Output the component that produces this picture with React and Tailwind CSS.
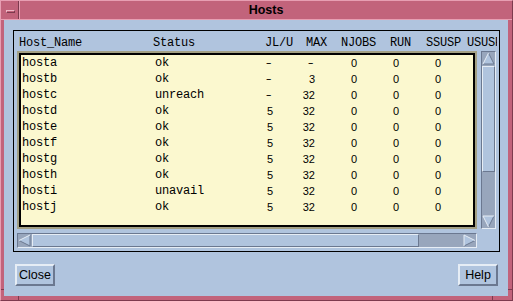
import React from "react";

const rows = [
  ["hosta", "ok", "-", "-", "0", "0", "0"],
  ["hostb", "ok", "-", "3", "0", "0", "0"],
  ["hostc", "unreach", "-", "32", "0", "0", "0"],
  ["hostd", "ok", "5", "32", "0", "0", "0"],
  ["hoste", "ok", "5", "32", "0", "0", "0"],
  ["hostf", "ok", "5", "32", "0", "0", "0"],
  ["hostg", "ok", "5", "32", "0", "0", "0"],
  ["hosth", "ok", "5", "32", "0", "0", "0"],
  ["hosti", "unavail", "5", "32", "0", "0", "0"],
  ["hostj", "ok", "5", "32", "0", "0", "0"],
];

const mono = "font-['Liberation_Mono',monospace] text-[12px] tracking-[-0.2px]";
const sans = "font-['Liberation_Sans',Arial,sans-serif]";

function Arrow({ dir }) {
  const pts = {
    up: "6.5,1 12,12 1,12",
    down: "1,1 12,1 6.5,12",
    left: "1,6.5 12,1 12,12",
    right: "1,1 12,6.5 1,12",
  }[dir];
  const light = {
    up: "M6.5 1 L1 12",
    down: "M1 1 L12 1 M1 1 L6.5 12",
    left: "M1 6.5 L12 1",
    right: "M1 1 L1 12 M1 1 L12 6.5",
  }[dir];
  const dark = {
    up: "M6.5 1 L12 12 L1 12",
    down: "M12 1 L6.5 12",
    left: "M1 6.5 L12 12 L12 1",
    right: "M1 12 L12 6.5",
  }[dir];
  return (
    <svg width="13" height="13" viewBox="0 0 13 13" className="block shrink-0">
      <polygon points={pts} fill="#b0c4de" />
      <path d={dark} stroke="#6b7890" strokeWidth="1" fill="none" />
      <path d={light} stroke="#e6edf5" strokeWidth="1" fill="none" />
    </svg>
  );
}

function Button({ children }) {
  return (
    <div
      className={`w-[40px] h-[22px] flex items-center justify-center bg-[#b0c4de] border-2 border-t-[#e6edf5] border-l-[#e6edf5] border-b-[#6b7890] border-r-[#6b7890] text-[12.5px] text-black ${sans}`}
    >
      {children}
    </div>
  );
}

function Num({ w, children }) {
  if (children === "-") {
    return (
      <div className={`${w} shrink-0 text-right text-[11px] leading-[16px] pr-px ${sans}`}>
        <span className="inline-block scale-x-[1.6] origin-right -translate-y-[1px]">-</span>
      </div>
    );
  }
  return <div className={`${w} shrink-0 text-right text-[11px] leading-[16px] ${sans}`}>{children}</div>;
}

export default function App() {
  return (
    <div className="w-[513px] h-[301px] bg-[#c2637b] flex flex-col border border-t-[#e79eb2] border-l-[#e79eb2] border-b-[#7d3a4e] border-r-[#7d3a4e]">
      {/* title bar */}
      <div className="h-[19px] flex border-b border-[#e79eb2]">
        <div className="w-[18px] flex items-center justify-center pl-[2px] pt-[2px] border-r border-[#7d3a4e]">
          <div className="w-[9px] h-[3px] border border-t-[#f0b8c6] border-l-[#f0b8c6] border-b-[#7d3a4e] border-r-[#7d3a4e]" />
        </div>
        <div className="w-px bg-[#e79eb2]" />
        <div className={`flex-1 flex items-center justify-center text-[12.5px] font-bold text-black leading-none pt-[1px] ${sans}`}>
          Hosts
        </div>
      </div>

      {/* middle */}
      <div className="flex-1 flex">
        <div className="w-[3px] flex flex-col">
          <div className="flex-1" />
          <div className="h-[7px] border-t border-[#7d3a4e]" />
        </div>
        <div className="w-[504px] bg-[#b0c4de] flex flex-col pt-[10px] pl-[9px] pr-[8px]">
          <div className="h-[222px] border border-black flex flex-col">
            {/* header */}
            <div className={`h-[20px] pt-[4px] pl-[5px] flex leading-[16px] whitespace-nowrap overflow-hidden text-black ${mono}`}>
              <div className="w-[134px] shrink-0">Host_Name</div>
              <div className="w-[112px] shrink-0">Status</div>
              <div className="w-[41px] shrink-0">JL/U</div>
              <div className="w-[35px] shrink-0">MAX</div>
              <div className="w-[49px] shrink-0">NJOBS</div>
              <div className="w-[36px] shrink-0">RUN</div>
              <div className="w-[41px] shrink-0">SSUSP</div>
              <div className="w-[30px] shrink-0 overflow-hidden">USUSP</div>
            </div>
            {/* body */}
            <div className="flex pl-[3px]">
              <div className="w-[460px] flex flex-col">
                <div className="h-[178px] border-2 border-[#a3a084]">
                  <div className="h-full border-2 border-black bg-[#fbf8cf] overflow-hidden">
                    {rows.map((r) => (
                      <div key={r[0]} className="h-[16px] flex items-center pl-[1px] text-black whitespace-nowrap">
                        <div className={`w-[133px] shrink-0 leading-[16px] ${mono}`}>{r[0]}</div>
                        <div className={`w-[85px] shrink-0 leading-[16px] ${mono}`}>{r[1]}</div>
                        <Num w="w-[33px]">{r[2]}</Num>
                        <Num w="w-[42px]">{r[3]}</Num>
                        <Num w="w-[42px]">{r[4]}</Num>
                        <Num w="w-[42px]">{r[5]}</Num>
                        <Num w="w-[42px]">{r[6]}</Num>
                      </div>
                    ))}
                  </div>
                </div>
                {/* horizontal scrollbar */}
                <div className="mt-[4px] h-[15px] flex bg-[#98a6bc] border border-t-[#6b7890] border-l-[#6b7890] border-b-[#e6edf5] border-r-[#e6edf5]">
                  <Arrow dir="left" />
                  <div className="w-[387px] ml-px bg-[#b0c4de] border border-t-[#e6edf5] border-l-[#e6edf5] border-b-[#6b7890] border-r-[#6b7890]" />
                  <div className="flex-1" />
                  <Arrow dir="right" />
                </div>
              </div>
              {/* vertical scrollbar */}
              <div className="ml-[4px] w-[15px] h-[178px] flex flex-col bg-[#98a6bc] border border-t-[#6b7890] border-l-[#6b7890] border-b-[#e6edf5] border-r-[#e6edf5]">
                <Arrow dir="up" />
                <div className="h-[106px] mt-px bg-[#b0c4de] border border-t-[#e6edf5] border-l-[#e6edf5] border-b-[#6b7890] border-r-[#6b7890]" />
                <div className="flex-1" />
                <Arrow dir="down" />
              </div>
            </div>
          </div>
          <div className="mt-[12px] flex justify-between px-[2px]">
            <Button>Close</Button>
            <Button>Help</Button>
          </div>
        </div>
        <div className="flex-1 flex flex-col">
          <div className="flex-1" />
          <div className="h-[7px] border-t border-[#7d3a4e]" />
        </div>
      </div>

      {/* bottom frame */}
      <div className="h-[4px] flex">
        <div className="w-[18px] border-r border-[#7d3a4e]" />
        <div className="flex-1 border-r border-[#7d3a4e]" />
        <div className="w-[19px]" />
      </div>
    </div>
  );
}
